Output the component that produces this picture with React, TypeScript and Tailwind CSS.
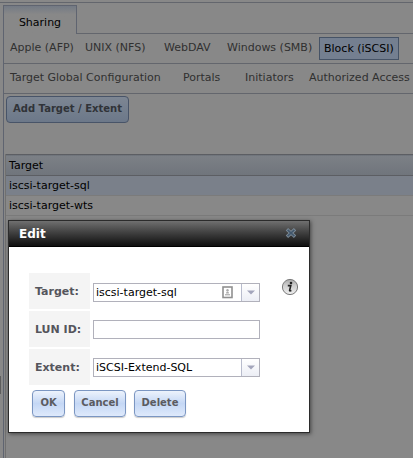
import React, { useState } from 'react';

interface ToolButtonProps {
  children: React.ReactNode;
  className?: string;
  onClick?: () => void;
}

const ToolButton: React.FC<ToolButtonProps> = ({ children, className = '', onClick }) => (
  <button
    type="button"
    onClick={onClick}
    className={`h-[27px] rounded-[4px] border pb-0.5 text-[10px] font-bold whitespace-nowrap ${className}`}
  >
    {children}
  </button>
);

interface NavItem {
  label: string;
  className: string;
}

const services: NavItem[] = [
  { label: 'Apple (AFP)', className: 'w-[75px]' },
  { label: 'UNIX (NFS)', className: 'w-[79px]' },
  { label: 'WebDAV', className: 'w-[63px]' },
  { label: 'Windows (SMB)', className: 'w-[92px]' },
  { label: 'Block (iSCSI)', className: '' },
];

const iscsiPages: NavItem[] = [
  { label: 'Target Global Configuration', className: 'w-[173px]' },
  { label: 'Portals', className: 'w-[62px]' },
  { label: 'Initiators', className: 'w-[64px]' },
  { label: 'Authorized Access', className: '' },
];

const targets = ['iscsi-target-sql', 'iscsi-target-wts'];

interface ComboProps {
  id: string;
  options: string[];
  value: string;
  onChange: (value: string) => void;
  badge?: React.ReactNode;
}

const Combo: React.FC<ComboProps> = ({ id, options, value, onChange, badge }) => (
  <div className="relative h-[19px] w-[167px]">
    <select
      id={id}
      value={value}
      onChange={(e) => onChange(e.target.value)}
      className="block h-full w-full appearance-none border border-[#b1b1bb] bg-white pt-px pr-6 pl-0.5 text-[11px] leading-4 text-black"
    >
      {options.map((option) => (
        <option key={option}>{option}</option>
      ))}
    </select>
    {badge}
    <span className="pointer-events-none absolute inset-y-px right-px flex w-[18px] items-center justify-center border-l border-[#b8bccd] bg-linear-to-b from-white to-[#eceef5]">
      <svg width="8" height="5" viewBox="0 0 8 5">
        <path d="M0 0.5H8L4 4.5Z" fill="#a3a5bb" />
      </svg>
    </span>
  </div>
);

const IdBadge = () => (
  <svg
    className="pointer-events-none absolute top-[3px] right-[27px]"
    width="11"
    height="13"
    viewBox="0 0 11 13"
  >
    <rect x="1" y="1" width="9" height="10.5" fill="#fff" stroke="#909090" strokeWidth="1.6" />
    <circle cx="5.5" cy="4.2" r="1.2" fill="#aaa" />
    <path d="M4 7.5Q4 5.4 5.5 5.4Q7 5.4 7 7.5Z" fill="#aaa" />
    <path d="M3 8.8H8" stroke="#999" strokeWidth="1" />
  </svg>
);

const InfoIcon = () => (
  <svg width="18" height="18" viewBox="0 0 18 18">
    <defs>
      <linearGradient id="info-fill" x1="0" y1="0" x2="0" y2="1">
        <stop offset="0" stopColor="#a9a9a9" />
        <stop offset="0.4" stopColor="#cfcfcf" />
        <stop offset="1" stopColor="#efefef" />
      </linearGradient>
    </defs>
    <circle cx="9" cy="9" r="7.6" fill="url(#info-fill)" stroke="#7a7a7a" strokeWidth="1" />
    <circle cx="10" cy="5" r="1.3" fill="#222" />
    <path d="M6.8 7.6H9.8L8.6 12.4Q8.6 13.2 10.4 12.5" fill="none" stroke="#222" strokeWidth="1.6" />
  </svg>
);

const EditDialog: React.FC<{ onClose: () => void }> = ({ onClose }) => {
  const [target, setTarget] = useState('iscsi-target-sql');
  const [lun, setLun] = useState('');
  const [extent, setExtent] = useState('iSCSI-Extend-SQL');

  const labelCell = 'h-9 w-[61px] bg-[#f4f4f4] pt-0.5 pl-1.5 align-middle';
  const label = 'text-[11px] font-bold text-[#55555c]';
  const dialogButton =
    'border-[#7b96c2] bg-linear-to-b from-[#edf3fc] via-[#c4d7f5] to-[#dfeafb] text-[#5b5b60] shadow-[0_1px_1px_#cccccc]';

  return (
    <div
      role="dialog"
      aria-labelledby="edit-title"
      className="absolute top-[220px] left-2 w-[302px] border border-[#2b2b2b] bg-white shadow-[1px_1px_4px_rgba(0,0,0,0.5)]"
    >
      <div className="flex h-[26px] items-center justify-between border-b border-black bg-linear-to-b from-[#707070] to-[#101010] pr-3 pl-2.5">
        <h2 id="edit-title" className="text-[12px] font-bold text-white">
          Edit
        </h2>
        <button type="button" aria-label="Close" onClick={onClose} className="mb-0.5">
          <svg width="12" height="12" viewBox="0 0 12 12">
            <path d="M3.2 3.4L8.8 8.6M8.8 3.4L3.2 8.6" stroke="#7d8c99" strokeWidth="3.4" strokeLinecap="square" />
            <path d="M3.2 3.4L8.8 8.6M8.8 3.4L3.2 8.6" stroke="#41566b" strokeWidth="1.6" strokeLinecap="square" />
          </svg>
        </button>
      </div>

      <div className="px-[18px] pt-6 pb-[15px]">
        <div className="flex items-start justify-between">
          <table className="border-separate border-spacing-0.5">
            <tbody>
              <tr>
                <td className={labelCell}>
                  <label htmlFor="target" className={label}>Target:</label>
                </td>
                <td className="pt-0.5 pl-px">
                  <Combo id="target" options={targets} value={target} onChange={setTarget} badge={<IdBadge />} />
                </td>
              </tr>
              <tr>
                <td className={labelCell}>
                  <label htmlFor="lun" className={label}>LUN ID:</label>
                </td>
                <td className="pl-px">
                  <input
                    id="lun"
                    type="text"
                    value={lun}
                    onChange={(e) => setLun(e.target.value)}
                    className="block h-[19px] w-[167px] border border-[#b1b1bb] bg-white px-0.5 text-[11px]"
                  />
                </td>
              </tr>
              <tr>
                <td className={labelCell}>
                  <label htmlFor="extent" className={label}>Extent:</label>
                </td>
                <td className="pl-px">
                  <Combo id="extent" options={['iSCSI-Extend-SQL']} value={extent} onChange={setExtent} />
                </td>
              </tr>
            </tbody>
          </table>
          <button type="button" aria-label="Target help" className="mt-[7px] -mr-2">
            <InfoIcon />
          </button>
        </div>

        <div className="mt-[3px] flex pl-[5px]">
          <ToolButton className={`w-[33px] ${dialogButton}`}>OK</ToolButton>
          <ToolButton className={`ml-[9px] w-[52px] ${dialogButton}`} onClick={onClose}>Cancel</ToolButton>
          <ToolButton className={`ml-2 w-[52px] ${dialogButton}`}>Delete</ToolButton>
        </div>
      </div>
    </div>
  );
};

const App: React.FC = () => {
  const [editing, setEditing] = useState(true);

  return (
    <div className="relative flex min-h-screen overflow-hidden bg-[#888888] pt-0.5 font-['DejaVu_Sans',Verdana,sans-serif] text-[11px] text-[#303030]">
      <div className="flex w-[3px] shrink-0 items-center border-t border-[#63666d] pt-[309px]">
        <span className="h-[18px] w-px bg-[#5c5c5c]" />
      </div>

      <div className="flex min-w-0 flex-1 flex-col border-t border-[#63666d]">
        <div className="flex pt-0.5">
          <button
            type="button"
            className="h-[29px] w-[74px] shrink-0 border-x border-t border-[#5f6470] bg-linear-to-b from-[#737a84] to-[#888888] to-30% pt-1.5 text-[11px] text-black"
          >
            Sharing
          </button>
          <div className="flex-1 border-b border-[#63666d]" />
        </div>

        <div className="flex-1 border-l border-[#5f6470]">
          <nav className="flex h-[30px] items-center border-b border-[#63666d] pl-1.5 whitespace-nowrap">
            {services.map(({ label, className }) =>
              label === 'Block (iSCSI)' ? (
                <a
                  key={label}
                  href="#iscsi"
                  aria-current="page"
                  className="h-[23px] border border-[#465366] bg-[#747f90] px-1 leading-[21px] text-black"
                >
                  {label}
                </a>
              ) : (
                <a key={label} href="#service" className={`shrink-0 ${className}`}>{label}</a>
              )
            )}
          </nav>

          <nav className="flex h-[30px] items-center border-b border-[#63666d] pl-1.5 whitespace-nowrap">
            {iscsiPages.map(({ label, className }) => (
              <a key={label} href="#page" className={`shrink-0 ${className}`}>{label}</a>
            ))}
          </nav>

          <div className="h-[60px] pt-0.5 pl-0.5">
            <ToolButton className="w-[123px] border-[#485468] bg-linear-to-b from-[#7d8693] to-[#6c7889] text-[#303338]">
              Add Target / Extent
            </ToolButton>
          </div>

          <div className="ml-px min-h-[304px] border-l border-[#707070]">
            <table className="w-full border-collapse text-left text-black">
              <thead>
                <tr className="h-[21px] border-y border-[#5c5e63] bg-linear-to-b from-[#7c8086] to-[#70757c]">
                  <th scope="col" className="pt-0.5 pr-0 pb-0 pl-[3px] font-normal">Target</th>
                </tr>
              </thead>
              <tbody>
                {targets.map((name, i) => (
                  <tr
                    key={name}
                    onDoubleClick={() => setEditing(true)}
                    className={`h-5 border-b border-[#7b7b7b] ${i === 0 ? 'bg-[#7a808a]' : 'bg-[#888888]'}`}
                  >
                    <td className="pt-0.5 pr-0 pb-0 pl-[3px]">{name}</td>
                  </tr>
                ))}
              </tbody>
            </table>
          </div>
        </div>
      </div>

      {editing && <EditDialog onClose={() => setEditing(false)} />}
    </div>
  );
};

export default App;
